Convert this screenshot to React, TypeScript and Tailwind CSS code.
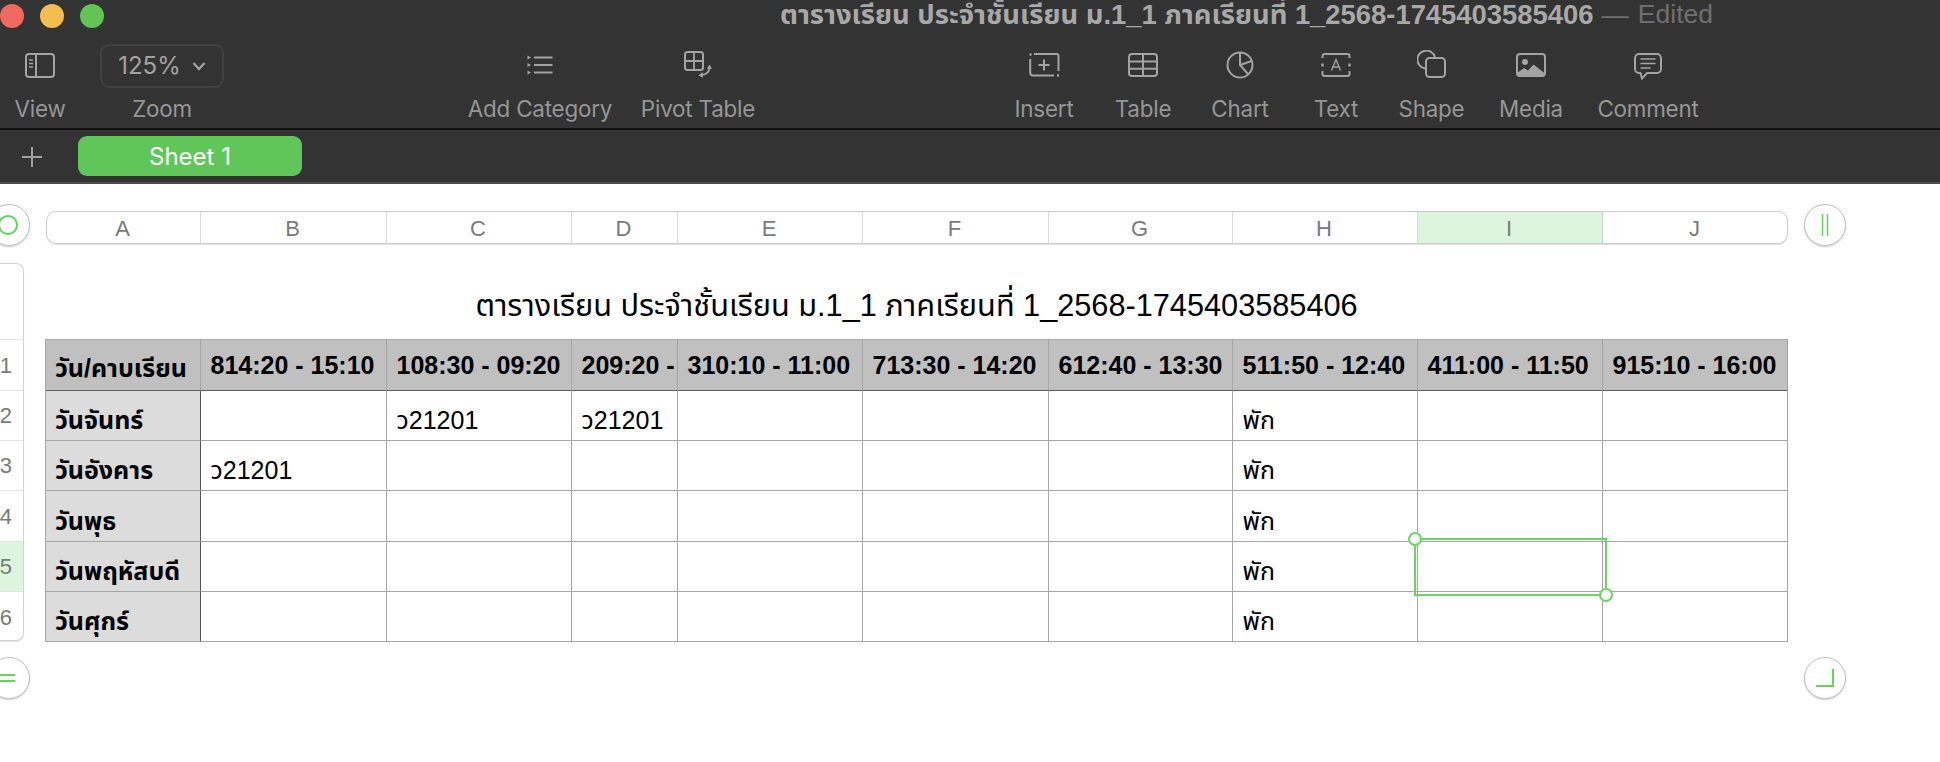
import type { ReactNode } from "react";

const font = "font-['Liberation_Sans','Noto_Sans_Thai','Noto_Sans','DejaVu_Sans',sans-serif]";

const columns = ["A", "B", "C", "D", "E", "F", "G", "H", "I", "J"];
const gridCols = "grid-cols-[155px_186px_185px_106px_185px_186px_184px_185px_185px_185px]";
const barCols = "grid-cols-[154px_186px_185px_106px_185px_186px_184px_185px_185px_185px]";

const rows = [
  { day: "วันจันทร์", cells: ["", "ว21201", "ว21201", "", "", "", "พัก", "", ""] },
  { day: "วันอังคาร", cells: ["ว21201", "", "", "", "", "", "พัก", "", ""] },
  { day: "วันพุธ", cells: ["", "", "", "", "", "", "พัก", "", ""] },
  { day: "วันพฤหัสบดี", cells: ["", "", "", "", "", "", "พัก", "", ""] },
  { day: "วันศุกร์", cells: ["", "", "", "", "", "", "พัก", "", ""] },
];

const headers = [
  "814:20 - 15:10",
  "108:30 - 09:20",
  "209:20 -",
  "310:10 - 11:00",
  "713:30 - 14:20",
  "612:40 - 13:30",
  "511:50 - 12:40",
  "411:00 - 11:50",
  "915:10 - 16:00",
];

function Icon({ w, h, children }: { w: number; h: number; children: ReactNode }) {
  return (
    <svg width={w} height={h} viewBox={`0 0 ${w} ${h}`} fill="none" stroke="#a3a3a3" strokeWidth="2">
      {children}
    </svg>
  );
}

function Tool({ label, width, ml, children }: { label: string; width: string; ml?: string; children: ReactNode }) {
  return (
    <div className={`flex flex-col items-center shrink-0 ${width} ${ml ?? ""}`}>
      <div className="h-[44px] flex items-center justify-center">{children}</div>
      <div className="mt-[9px] text-[22.4px] leading-[26px] text-[#969696] whitespace-nowrap font-['Inter',sans-serif] tracking-[-0.2px]">{label}</div>
    </div>
  );
}

function RoundHandle({ children, className }: { children: ReactNode; className?: string }) {
  return (
    <div className={`w-[42px] h-[42px] rounded-full bg-white border border-[#c0c0c0] shadow-[0_1px_2px_rgba(0,0,0,0.2)] flex items-center justify-center ${className ?? ""}`}>
      {children}
    </div>
  );
}

export default function App() {
  return (
    <div className={`w-[1940px] h-[762px] overflow-hidden bg-white ${font}`}>
      {/* toolbar */}
      <div className="bg-[#333333] h-[184px] flex flex-col border-b-2 border-[#4d4d4d]">
        <div className="h-[32px] flex items-start pt-[4px]">
          <div className="flex gap-[16px]">
            <span className="w-[24px] h-[24px] rounded-full bg-[#ee6a5f]" />
            <span className="w-[24px] h-[24px] rounded-full bg-[#f5bd4f]" />
            <span className="w-[24px] h-[24px] rounded-full bg-[#61c454]" />
          </div>
          <div className="ml-[676px] -mt-[4px] flex items-center h-[30px] text-[27.4px] font-bold whitespace-nowrap text-[#a8a8a8]">
            <span>ตารางเรียน ประจำชั้นเรียน ม.1_1 ภาคเรียนที่ 1_2568-1745403585406</span>
            <span className="ml-[8px] text-[#6f6f6f] font-normal">—</span>
            <span className="ml-[9px] text-[#6f6f6f] font-normal text-[26.5px]">Edited</span>
          </div>
        </div>
        <div className="h-[96px] flex items-start pt-[11px]">
          <Tool label="View" width="w-[80px]">
            <Icon w={30} h={25}>
              <rect x="1" y="1" width="28" height="23" rx="3" />
              <path d="M11 1v23" />
              <path d="M4 7h4M4 10.5h4M4 14h4" strokeWidth="1.5" />
            </Icon>
          </Tool>
          <div className="ml-[20px]">
            <Tool label="Zoom" width="w-[124px]">
              <div className="translate-y-[1px] w-[124px] h-[44px] rounded-[9px] border-2 border-[#414141] flex items-center justify-center gap-[11px] text-[#a3a3a3] text-[24px] font-['Inter',sans-serif]">
                <span>125%</span>
                <svg width="14" height="10" viewBox="0 0 14 10" fill="none" stroke="#a3a3a3" strokeWidth="2.2">
                  <path d="M1.5 2 7 8l5.5-6" />
                </svg>
              </div>
            </Tool>
          </div>
          <Tool label="Add Category" width="w-[150px]" ml="ml-[241px]">
            <Icon w={26} h={20}>
              <path d="M7 2.500h18.500M7 10h18.500M7 17.500h18.500" />
              <path d="M0.500 0.500l3.500 2-3.500 2zM0.500 8l3.500 2-3.500 2zM0.500 15.500l3.500 2-3.500 2z" fill="#a3a3a3" stroke="none" />
            </Icon>
          </Tool>
          <Tool label="Pivot Table" width="w-[116px]" ml="ml-[25px]">
            <Icon w={28} h={28}>
              <rect x="1" y="1" width="18" height="18" rx="2.500" />
              <path d="M10 1v18M1 10h18" strokeWidth="1.800" />
              <path d="M25.500 16c0 4.500-3 7.500-8 8" strokeWidth="1.800" />
              <path d="M22.800 17.500l3-4 2.200 4.400zM18.500 21l-4 3.500 4.500 2.200z" fill="#a3a3a3" stroke="none" />
            </Icon>
          </Tool>
          <Tool label="Insert" width="w-[70px]" ml="ml-[253px]">
            <Icon w={31} h={24}>
              <path d="M5 1h22a2 2 0 0 1 2.500 2v15M1.200 6v13.500a3 3 0 0 0 3 3H25" />
              <path d="M0.500 1.500h2M28 22.500h2" strokeWidth="2.400" />
              <path d="M15 6.500v11M9.500 12h11" />
            </Icon>
          </Tool>
          <Tool label="Table" width="w-[70px]" ml="ml-[29px]">
            <Icon w={30} h={24}>
              <rect x="1" y="1" width="28" height="22" rx="3" />
              <path d="M1 8.500h28M1 15.800h28M15 1v22" />
            </Icon>
          </Tool>
          <Tool label="Chart" width="w-[70px]" ml="ml-[27px]">
            <Icon w={28} h={28}>
              <circle cx="14" cy="14" r="12.500" />
              <path d="M14 1.500V14l8 9" />
              <path d="M14 14l11.500-4" />
            </Icon>
          </Tool>
          <Tool label="Text" width="w-[70px]" ml="ml-[26px]">
            <svg width="30" height="24" viewBox="0 0 30 24" fill="none" stroke="#a3a3a3" strokeWidth="2">
              <path d="M1.500 5V3a2 2 0 0 1 2-2h23a2 2 0 0 1 2 2v2M1.500 18v3a2 2 0 0 0 2 2h23a2 2 0 0 0 2-2v-3" />
              <path d="M1.500 10.500v3M28.500 10.500v3" strokeWidth="2.400" />
              <path d="M10.500 17.500 15 6.500l4.500 11M12 14h6" strokeWidth="1.400" />
            </svg>
          </Tool>
          <Tool label="Shape" width="w-[70px]" ml="ml-[25.5px]">
            <div className="-mt-[2px]">
              <Icon w={29} h={28}>
                <path d="M8 18.500A9 9 0 1 1 18 7" />
                <rect x="9" y="8" width="19" height="19" rx="3.500" />
              </Icon>
            </div>
          </Tool>
          <Tool label="Media" width="w-[70px]" ml="ml-[29.5px]">
            <Icon w={30} h={24}>
              <rect x="1" y="1" width="28" height="22" rx="3" />
              <circle cx="9" cy="9" r="3" fill="#a3a3a3" stroke="none" />
              <path d="M1 20l7-5 4 2.500 5.500-6 11.500 9v1.500a2 2 0 0 1-2 1.500H3a2 2 0 0 1-2-1.500z" fill="#a3a3a3" stroke="none" />
            </Icon>
          </Tool>
          <Tool label="Comment" width="w-[104px]" ml="ml-[30px]">
            <div className="mt-[2px]">
              <Icon w={28} h={27}>
                <path d="M5 1h18a4 4 0 0 1 4 4v11a4 4 0 0 1-4 4H13l-5 5.500-1.500-5.500H5a4 4 0 0 1-4-4V5a4 4 0 0 1 4-4z" />
                <path d="M6.500 6h15M6.500 10.500h15M6.500 15h10" strokeWidth="1.600" />
              </Icon>
            </div>
          </Tool>
        </div>
        <div className="h-[2px] bg-[#111111]" />
        <div className="flex-1 flex items-start pt-[6px]">
          <div className="w-[64px] h-[42px] flex items-center justify-center">
            <svg width="22" height="22" viewBox="0 0 22 22" stroke="#a0a0a0" strokeWidth="2">
              <path d="M11 1v20M1 11h20" />
            </svg>
          </div>
          <div className="ml-[14px] w-[224px] h-[40px] pt-[1px] rounded-[9px] bg-[#61c65a] text-white text-[24px] flex items-center justify-center font-['Inter',sans-serif]">
            Sheet 1
          </div>
        </div>
      </div>

      {/* canvas */}
      <div className="pt-[20px] grid grid-cols-[45px_1743px_1fr] grid-rows-[59px_378px_58px]">
        <div>
          <RoundHandle className="-ml-[12px]">
            <span className="w-[20px] h-[20px] rounded-full border-2 border-[#63d45c] -ml-[2px]" />
          </RoundHandle>
        </div>
        <div className={`mt-[7px] ml-[1px] h-[33px] grid ${barCols} rounded-[10px] border border-[#cbcbcb] shadow-[0_1px_1px_rgba(0,0,0,0.12)] overflow-hidden`}>
          {columns.map((c) => (
            <div
              key={c}
              className={`flex items-center justify-center pr-[2px] text-[22px] text-[#7a7a7a] border-r last:border-r-0 border-[#dcdcdc] ${
                c === "I" ? "bg-[#dcf5dc] border-r-[#bfdcbf]" : ""
              }`}
            >
              {c}
            </div>
          ))}
        </div>
        <div className="pl-[16px]">
          <RoundHandle>
            <svg width="10" height="24" viewBox="0 0 10 24" stroke="#63d45c" strokeWidth="1.500">
              <path d="M2.500 1v22M7.500 1v22" />
            </svg>
          </RoundHandle>
        </div>

        {/* row numbers */}
        <div className="w-[24px] h-[378px] bg-white border border-l-0 border-[#d2d2d2] rounded-r-[8px] shadow-[0_1px_1px_rgba(0,0,0,0.12)] overflow-hidden flex flex-col">
          <div className="h-[76px] border-b border-[#e4e4e4] shrink-0" />
          {[
            { n: "1", h: "h-[51px]" },
            { n: "2", h: "h-[50px]" },
            { n: "3", h: "h-[50px]" },
            { n: "4", h: "h-[51px]" },
            { n: "5", h: "h-[50px] bg-[#dcf5dc]" },
            { n: "6", h: "h-[50px]" },
          ].map((r) => (
            <div key={r.n} className={`${r.h} shrink-0 flex items-center justify-end pr-[11px] text-[22px] text-[#7a7a7a] border-b last:border-b-0 border-[#e4e4e4]`}>
              {r.n}
            </div>
          ))}
        </div>

        {/* table */}
        <div className="relative">
          <div className="h-[76px] flex items-center justify-center pt-[11px] text-[30.7px] text-black whitespace-nowrap">
            ตารางเรียน ประจำชั้นเรียน ม.1_1 ภาคเรียนที่ 1_2568-1745403585406
          </div>
          <div className={`grid ${gridCols} grid-rows-[51px_50px_50px_51px_50px_50px] border-l border-t border-[#a6a6a6] text-[25px] text-black`}>
            <div className="bg-[#bfc0bf] border-r border-b border-r-[#a6a6a6] border-b-[#5f5f5f] flex items-end pl-[9px] pb-[3px] font-bold whitespace-nowrap">
              วัน/คาบเรียน
            </div>
            {headers.map((h) => (
              <div key={h} className="bg-[#bfc0bf] border-r border-b border-r-[#a6a6a6] border-b-[#5f5f5f] flex items-center pl-[9.5px] pt-[1px] font-bold whitespace-nowrap overflow-hidden">
                {h}
              </div>
            ))}
            {rows.map((r) => (
              <div key={r.day} className="contents">
                <div className="bg-[#dcdcdc] border-r border-b border-r-[#555555] border-b-[#a6a6a6] flex items-end pl-[9px] pb-[1px] font-bold whitespace-nowrap">
                  {r.day}
                </div>
                {r.cells.map((c, i) => (
                  <div key={i} className="border-r border-b border-[#a6a6a6] flex items-end pl-[9.5px] pb-[1px] whitespace-nowrap">
                    {c}
                  </div>
                ))}
              </div>
            ))}
          </div>
          {/* selected cell */}
          <div className="absolute left-[1368.500px] top-[274.500px] w-[193px] h-[58.500px] border-[2.500px] border-[#69d65f]">
            <span className="absolute -left-[8px] -top-[8px] w-[14px] h-[14px] rounded-full bg-white border-2 border-[#69d65f]" />
            <span className="absolute -right-[8px] -bottom-[8px] w-[14px] h-[14px] rounded-full bg-white border-2 border-[#69d65f]" />
          </div>
        </div>
        <div />

        <div className="pt-[16px]">
          <RoundHandle className="-ml-[12px]">
            <svg width="24" height="8" viewBox="0 0 24 8" stroke="#63d45c" strokeWidth="1.800" className="-ml-[12px]">
              <path d="M0 1h24M0 7h24" />
            </svg>
          </RoundHandle>
        </div>
        <div />
        <div className="pl-[16px] pt-[16px]">
          <RoundHandle>
            <svg width="18" height="18" viewBox="0 0 18 18" fill="none" stroke="#63d45c" strokeWidth="2">
              <path d="M17 0v17H0" />
            </svg>
          </RoundHandle>
        </div>
      </div>
    </div>
  );
}
